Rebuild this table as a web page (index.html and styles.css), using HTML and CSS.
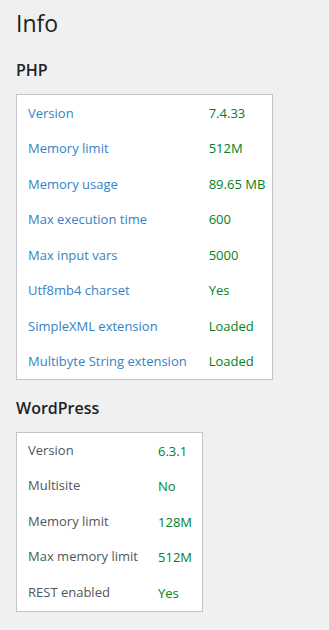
FILE: index.html
```html
<!DOCTYPE html>
<html lang="en">
<head>
<meta charset="utf-8">
<title>Info</title>
<link rel="stylesheet" href="styles.css">
</head>
<body>
<main class="page">
  <h1 class="page-title">Info</h1>

  <section class="info-section">
    <h2 class="section-title">PHP</h2>
    <div class="info-table info-table--php">
      <span class="info-label">Version</span><span class="info-value">7.4.33</span>
      <span class="info-label">Memory limit</span><span class="info-value">512M</span>
      <span class="info-label">Memory usage</span><span class="info-value">89.65 MB</span>
      <span class="info-label">Max execution time</span><span class="info-value">600</span>
      <span class="info-label">Max input vars</span><span class="info-value">5000</span>
      <span class="info-label">Utf8mb4 charset</span><span class="info-value">Yes</span>
      <span class="info-label">SimpleXML extension</span><span class="info-value">Loaded</span>
      <span class="info-label">Multibyte String extension</span><span class="info-value">Loaded</span>
    </div>
  </section>

  <section class="info-section">
    <h2 class="section-title">WordPress</h2>
    <div class="info-table info-table--wp">
      <span class="info-label">Version</span><span class="info-value">6.3.1</span>
      <span class="info-label">Multisite</span><span class="info-value">No</span>
      <span class="info-label">Memory limit</span><span class="info-value">128M</span>
      <span class="info-label">Max memory limit</span><span class="info-value">512M</span>
      <span class="info-label">REST enabled</span><span class="info-value">Yes</span>
    </div>
  </section>
</main>
</body>
</html>
```

FILE: styles.css
```css
html, body {
  margin: 0;
  padding: 0;
  background: #f0f0f1;
}

body {
  font-family: "Open Sans", "Noto Sans", Arial, sans-serif;
  color: #1d2327;
}

.page {
  padding: 6px 16px 20px;
}

.page-title {
  margin: 0;
  font-size: 23px;
  font-weight: 400;
  line-height: 34px;
  color: #1d2327;
}

.section-title {
  margin: 19px 0 13px;
  font-size: 16px;
  font-weight: 600;
  line-height: 22px;
  color: #1d2327;
}

.info-section + .info-section .section-title {
  margin-top: 17px;
}

.info-table {
  display: inline-grid;
  grid-template-columns: auto auto;
  grid-auto-rows: 35.5px;
  column-gap: 20px;
  align-items: center;
  padding: 0 10px 0 11px;
  background: #fff;
  border: 1px solid #c3c4c7;
  font-size: 13px;
  line-height: 18px;
}

.info-table--php {
  column-gap: 22px;
  padding-right: 7px;
}

.info-label {
  white-space: nowrap;
}

.info-value {
  color: #00821e;
  white-space: nowrap;
}

.info-table--php .info-label {
  color: #3582c4;
}

.info-table--wp .info-label {
  color: #50575e;
  margin-top: -2px;
}
```
